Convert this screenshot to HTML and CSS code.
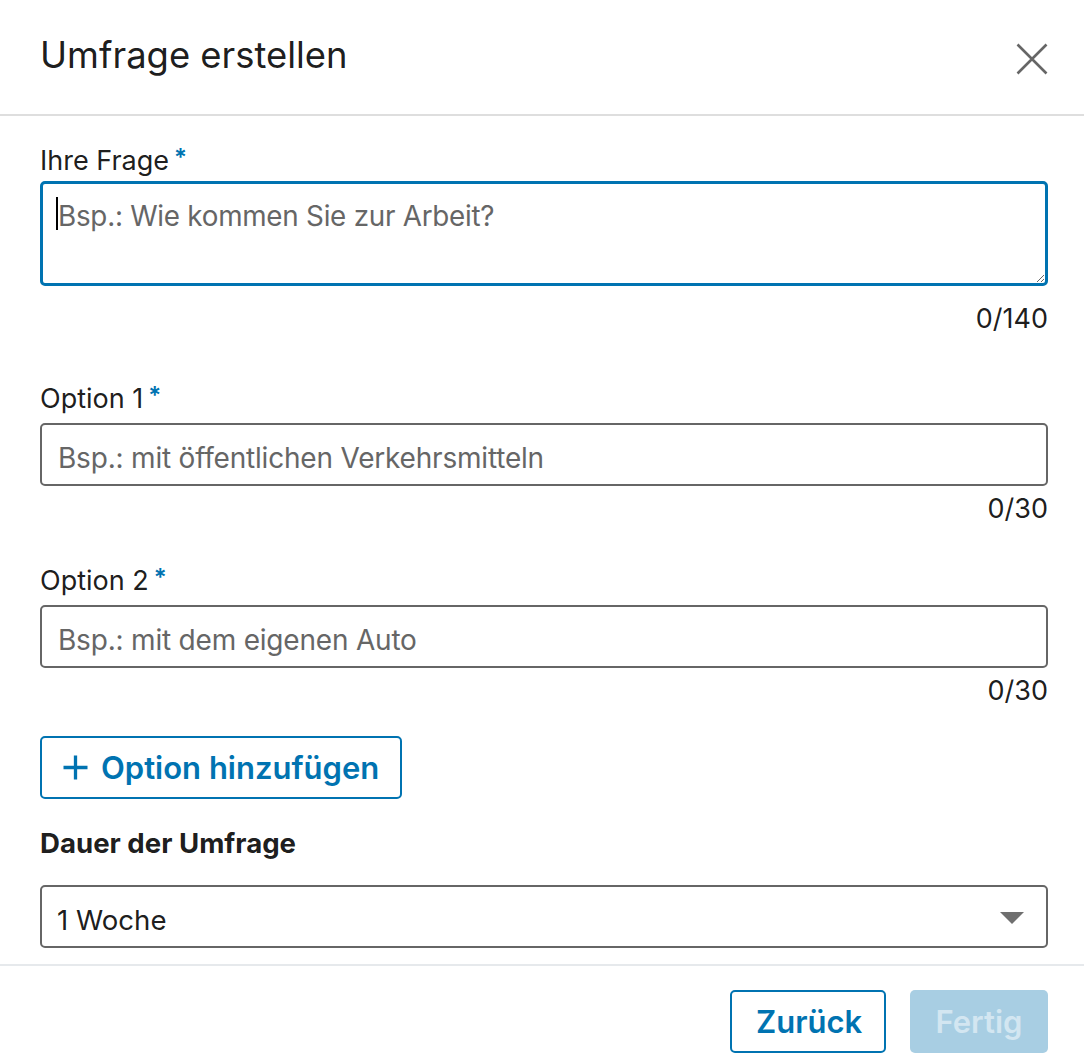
FILE: index.html
```html
<!DOCTYPE html>
<html lang="de">
<head>
<meta charset="utf-8">
<title>Umfrage erstellen</title>
<link rel="stylesheet" href="styles.css">
</head>
<body>
<div class="modal">
  <header class="modal-header">
    <h1 class="modal-title">Umfrage erstellen</h1>
    <button class="close-btn" aria-label="Schließen">
      <svg width="32" height="32" viewBox="0 0 32 32" aria-hidden="true">
        <path d="M1.5 1.5 L30.5 30.5 M30.5 1.5 L1.5 30.5" stroke="#666666" stroke-width="2.6" fill="none"/>
      </svg>
    </button>
  </header>

  <main class="modal-body">
    <div class="field field-question">
      <label class="field-label">Ihre Frage<span class="req">*</span></label>
      <div class="textarea-wrap">
        <textarea class="textarea" placeholder="Bsp.: Wie kommen Sie zur Arbeit?"></textarea>
        <span class="caret"></span>
      </div>
      <div class="counter counter-q">0/140</div>
    </div>

    <div class="field field-opt1">
      <label class="field-label">Option 1<span class="req">*</span></label>
      <input class="input" type="text" placeholder="Bsp.: mit öffentlichen Verkehrsmitteln">
      <div class="counter">0/30</div>
    </div>

    <div class="field field-opt2">
      <label class="field-label">Option 2<span class="req">*</span></label>
      <input class="input" type="text" placeholder="Bsp.: mit dem eigenen Auto">
      <div class="counter">0/30</div>
    </div>

    <button class="add-btn">
      <svg class="plus" width="25" height="25" viewBox="0 0 25 25" aria-hidden="true">
        <path d="M12.5 0.5 V24.5 M0.5 12.5 H24.5" stroke="#0073b1" stroke-width="3.3" fill="none"/>
      </svg>
      <span>Option hinzufügen</span>
    </button>

    <div class="duration">
      <div class="duration-label">Dauer der Umfrage</div>
      <div class="select">
        <span class="select-value">1 Woche</span>
        <svg class="select-arrow" width="24" height="12" viewBox="0 0 24 12" aria-hidden="true">
          <path d="M0 0 H24 L12 12 Z" fill="#6f6f6f"/>
        </svg>
      </div>
    </div>
  </main>

  <footer class="modal-footer">
    <button class="btn btn-secondary">Zurück</button>
    <button class="btn btn-primary" disabled>Fertig</button>
  </footer>
</div>
</body>
</html>
```

FILE: styles.css
```css
* { box-sizing: border-box; }

html, body {
  margin: 0;
  padding: 0;
  background: #ffffff;
}

body {
  font-family: Inter, "Noto Sans", "Liberation Sans", sans-serif;
  color: rgba(0, 0, 0, 0.9);
}

.modal {
  width: 1084px;
}

.modal-header {
  height: 116px;
  border-bottom: 2px solid #dedede;
  display: flex;
  align-items: center;
  justify-content: space-between;
  padding: 0 36px 4px 40px;
}

.modal-title {
  margin: 0;
  font-size: 36.4px;
  font-weight: 400;
  line-height: 44px;
}

.close-btn {
  border: 0;
  background: transparent;
  padding: 0;
  margin-top: 8px;
  width: 32px;
  height: 32px;
  display: flex;
}

.modal-body {
  padding: 24px 36px 0 40px;
}

.field-label {
  display: block;
  font-size: 27px;
  line-height: 36px;
  color: rgba(0, 0, 0, 0.9);
}

.req {
  color: #0073b1;
  font-size: 24px;
  font-weight: 600;
  margin-left: 5px;
  vertical-align: 4px;
}

.textarea-wrap {
  position: relative;
  margin-top: 2px;
}

.textarea {
  display: block;
  width: 100%;
  height: 105px;
  border: 3px solid #0073b1;
  border-radius: 5px;
  padding: 12px 15px 10px;
  font-family: inherit;
  font-size: 27.8px;
  letter-spacing: -0.25px;
  line-height: 40px;
  resize: vertical;
  outline: none;
  color: rgba(0, 0, 0, 0.9);
}

.textarea::placeholder,
.input::placeholder {
  color: #666666;
  opacity: 1;
}

.caret {
  position: absolute;
  left: 16px;
  top: 16px;
  width: 2px;
  height: 33px;
  background: #000;
}

.counter {
  text-align: right;
  font-size: 27px;
  line-height: 36px;
  margin-top: 5px;
  color: rgba(0, 0, 0, 0.9);
}

.counter-q {
  margin-top: 15px;
}

.field-opt1 {
  margin-top: 41px;
}

.field-opt2 {
  margin-top: 33px;
}

.input {
  display: block;
  width: 100%;
  height: 63px;
  margin-top: 6px;
  border: 2px solid #666666;
  border-radius: 5px;
  padding: 7px 15px 0 16px;
  font-family: inherit;
  font-size: 28px;
  letter-spacing: -0.2px;
  color: rgba(0, 0, 0, 0.9);
  outline: none;
}

.add-btn {
  margin-top: 27px;
  height: 63px;
  display: inline-flex;
  align-items: center;
  gap: 13px;
  padding: 0 21px 0 21px;
  border: 2px solid #0073b1;
  border-radius: 5px;
  background: #fff;
  color: #0073b1;
  font-family: inherit;
  font-size: 31px;
  font-weight: 600;
}

.plus {
  flex: none;
}

.duration {
  margin-top: 26px;
}

.duration-label {
  font-size: 27.6px;
  line-height: 36px;
  font-weight: 700;
  color: rgba(0, 0, 0, 0.9);
}

.select {
  margin-top: 24px;
  height: 63px;
  border: 2px solid #666666;
  border-radius: 5px;
  display: flex;
  align-items: center;
  justify-content: space-between;
  padding: 0 22px 0 15px;
}

.select-value {
  font-size: 27.6px;
  padding-top: 7px;
  color: rgba(0, 0, 0, 0.9);
}

.select-arrow {
  margin-top: 2px;
}

.modal-footer {
  margin-top: 16px;
  border-top: 2px solid #e6e9ec;
  padding: 24px 36px 0 40px;
  display: flex;
  justify-content: flex-end;
  gap: 24px;
}

.btn {
  height: 63px;
  border-radius: 5px;
  font-family: inherit;
  font-size: 31px;
  font-weight: 600;
  padding: 0 24px;
}

.btn-secondary {
  background: #fff;
  border: 2px solid #0073b1;
  color: #0073b1;
  width: 156px;
}

.btn-primary {
  background: #a8cee3;
  border: 0;
  color: #d3e6f1;
  width: 138px;
}
```
